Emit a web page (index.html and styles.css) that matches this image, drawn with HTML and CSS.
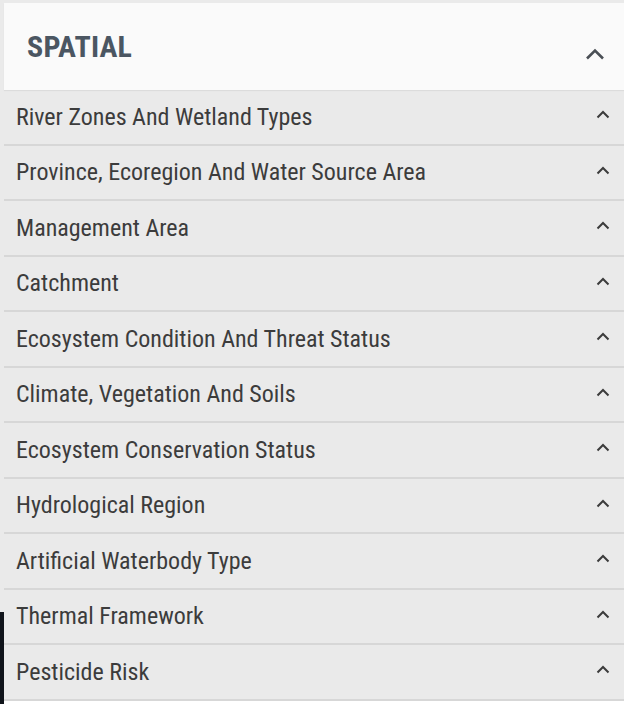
FILE: index.html
```html
<!DOCTYPE html>
<html lang="en">
<head>
<meta charset="utf-8">
<link rel="stylesheet" href="styles.css">
</head>
<body>
<div class="panel">
  <div class="header">
    <span class="title">SPATIAL</span>
    <svg class="chev-lg" width="20" height="12" viewBox="0 0 20 12"><path d="M2 10.5 L10 2.5 L18 10.5" fill="none" stroke="#4a4f55" stroke-width="2.6"/></svg>
  </div>
  <ul class="list">
    <li class="row"><span>River Zones And Wetland Types</span><svg class="chev" width="14" height="9" viewBox="0 0 14 9"><path d="M1.5 7.5 L7 2 L12.5 7.5" fill="none" stroke="#3c3c3c" stroke-width="2"/></svg></li>
    <li class="row"><span>Province, Ecoregion And Water Source Area</span><svg class="chev" width="14" height="9" viewBox="0 0 14 9"><path d="M1.5 7.5 L7 2 L12.5 7.5" fill="none" stroke="#3c3c3c" stroke-width="2"/></svg></li>
    <li class="row"><span>Management Area</span><svg class="chev" width="14" height="9" viewBox="0 0 14 9"><path d="M1.5 7.5 L7 2 L12.5 7.5" fill="none" stroke="#3c3c3c" stroke-width="2"/></svg></li>
    <li class="row"><span>Catchment</span><svg class="chev" width="14" height="9" viewBox="0 0 14 9"><path d="M1.5 7.5 L7 2 L12.5 7.5" fill="none" stroke="#3c3c3c" stroke-width="2"/></svg></li>
    <li class="row"><span>Ecosystem Condition And Threat Status</span><svg class="chev" width="14" height="9" viewBox="0 0 14 9"><path d="M1.5 7.5 L7 2 L12.5 7.5" fill="none" stroke="#3c3c3c" stroke-width="2"/></svg></li>
    <li class="row"><span>Climate, Vegetation And Soils</span><svg class="chev" width="14" height="9" viewBox="0 0 14 9"><path d="M1.5 7.5 L7 2 L12.5 7.5" fill="none" stroke="#3c3c3c" stroke-width="2"/></svg></li>
    <li class="row"><span>Ecosystem Conservation Status</span><svg class="chev" width="14" height="9" viewBox="0 0 14 9"><path d="M1.5 7.5 L7 2 L12.5 7.5" fill="none" stroke="#3c3c3c" stroke-width="2"/></svg></li>
    <li class="row"><span>Hydrological Region</span><svg class="chev" width="14" height="9" viewBox="0 0 14 9"><path d="M1.5 7.5 L7 2 L12.5 7.5" fill="none" stroke="#3c3c3c" stroke-width="2"/></svg></li>
    <li class="row"><span>Artificial Waterbody Type</span><svg class="chev" width="14" height="9" viewBox="0 0 14 9"><path d="M1.5 7.5 L7 2 L12.5 7.5" fill="none" stroke="#3c3c3c" stroke-width="2"/></svg></li>
    <li class="row"><span>Thermal Framework</span><svg class="chev" width="14" height="9" viewBox="0 0 14 9"><path d="M1.5 7.5 L7 2 L12.5 7.5" fill="none" stroke="#3c3c3c" stroke-width="2"/></svg></li>
    <li class="row"><span>Pesticide Risk</span><svg class="chev" width="14" height="9" viewBox="0 0 14 9"><path d="M1.5 7.5 L7 2 L12.5 7.5" fill="none" stroke="#3c3c3c" stroke-width="2"/></svg></li>
  </ul>
</div>
<div class="edge"></div>
</body>
</html>
```
FILE: styles.css
```css
html, body {
  margin: 0;
  padding: 0;
}
body {
  background: #ffffff;
  font-family: "Roboto Condensed", Roboto, sans-serif;
  position: relative;
  height: 704px;
  overflow: hidden;
}
.panel {
  background: #eaeaea;
  padding-top: 3px;
}
.header {
  margin-left: 4px;
  height: 87px;
  background: #fafafa;
  display: flex;
  align-items: center;
  justify-content: space-between;
  padding: 0 19px 0 23px;
  box-shadow: 0 1px 1px rgba(0,0,0,0.06);
}
.title {
  font-size: 30px;
  font-weight: 700;
  color: #4b5662;
  letter-spacing: 0.2px;
  padding-bottom: 1px;
}
.chev-lg {
  display: block;
  margin-top: 14px;
}
.list {
  list-style: none;
  margin: 0;
  padding: 0;
}
.row {
  height: 53.5px;
  border-bottom: 2px solid #d7d7d7;
  margin-left: 4px;
  padding: 0 14px 0 12px;
  display: flex;
  align-items: center;
  justify-content: space-between;
  font-size: 24px;
  color: #3c3c3c;
}
.row span {
  display: block;
}
.chev {
  display: block;
  margin-bottom: 4px;
}
.edge {
  position: absolute;
  left: 0;
  top: 612px;
  width: 4px;
  height: 92px;
  background: #10141b;
}
```
